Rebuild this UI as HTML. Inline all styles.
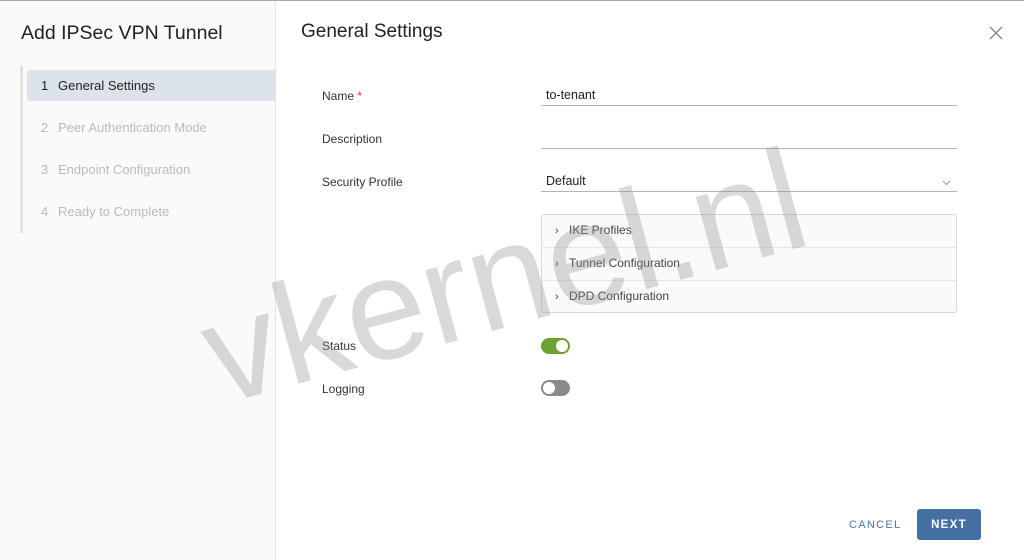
<!DOCTYPE html>
<html><head><meta charset="utf-8"><style>
*{margin:0;padding:0;box-sizing:border-box}
body{width:1024px;height:560px;overflow:hidden;background:#fff;font-family:"Liberation Sans",sans-serif;position:relative;color:#333}
.top{position:absolute;left:0;top:0;width:1024px;height:1px;background:#a8a8a8}
.left{position:absolute;left:0;top:1px;width:276px;height:559px;background:#fafafa;border-right:1px solid #e6e6e6}
.title{position:absolute;left:21px;top:21px;font-size:19.5px;color:#222}
.bar{position:absolute;left:20px;top:65px;width:3px;height:167px;background:#e2e2e2}
.step{position:absolute;left:27px;width:249px;height:31px;font-size:13px;line-height:31px;padding-left:14px;color:#bbb}
.step b{font-weight:normal;display:inline-block;width:17px}
.step.a{background:#dde3ea;color:#222;border-radius:3px 0 0 3px}
.h{position:absolute;left:301px;top:21px;font-size:19px;color:#222}
.x{position:absolute;left:989px;top:26px}
.lab{position:absolute;left:322px;font-size:12px;color:#333}
.inp{position:absolute;left:541px;width:416px;height:20px;border-bottom:1px solid #b5b5b5;font-size:12.5px;padding-left:5px;padding-top:2px;color:#222}
.acc{position:absolute;left:541px;top:214px;width:416px;height:99px;border:1px solid #d8d8d8;border-radius:3px;background:#fafafa}
.row{height:33px;border-bottom:1px solid #e6e6e6;font-size:12px;line-height:31px;padding-left:13px;color:#444}
.row:last-child{border-bottom:none}
.row span{display:inline-block;width:14px;font-size:11px}
.tg{position:absolute;left:541px;width:29px;height:16px;border-radius:8px}
.tg i{position:absolute;top:2px;width:12px;height:12px;border-radius:50%;background:#fff}
.wm{position:absolute;left:220px;top:284px;font-size:144px;line-height:1;color:rgba(150,150,150,0.36);transform:rotate(-15.2deg);transform-origin:0 122px;white-space:nowrap}
.cancel{position:absolute;left:849px;top:519px;font-size:11px;letter-spacing:1.3px;color:#4a77a6}
.next{position:absolute;left:917px;top:509px;width:64px;height:31px;background:#4471a1;border-radius:3px;color:#fff;font-size:11.5px;letter-spacing:1.3px;line-height:33px;text-align:center;font-weight:bold}
</style></head><body>
<div class="top"></div>
<div class="left">
<div class="title">Add IPSec VPN Tunnel</div>
<div class="bar"></div>
<div class="step a" style="top:69px"><b>1</b>General Settings</div>
<div class="step" style="top:111px"><b>2</b>Peer Authentication Mode</div>
<div class="step" style="top:153px"><b>3</b>Endpoint Configuration</div>
<div class="step" style="top:195px"><b>4</b>Ready to Complete</div>
</div>
<div class="h">General Settings</div>
<svg class="x" width="14" height="14" viewBox="0 0 14 14"><path d="M1 1L13 13M13 1L1 13" stroke="#888" stroke-width="1.3"/></svg>
<div class="lab" style="top:89px">Name <span style="color:#d44">*</span></div>
<div class="lab" style="top:132px">Description</div>
<div class="lab" style="top:175px">Security Profile</div>
<div class="inp" style="top:86px">to-tenant</div>
<div class="inp" style="top:129px"></div>
<div class="inp" style="top:172px">Default<svg style="position:absolute;right:6px;top:8px" width="9" height="6" viewBox="0 0 9 6"><path d="M1 1L4.5 4.5L8 1" stroke="#999" fill="none"/></svg></div>
<div class="acc">
<div class="row"><span>›</span>IKE Profiles</div>
<div class="row"><span>›</span>Tunnel Configuration</div>
<div class="row"><span>›</span>DPD Configuration</div>
</div>
<div class="lab" style="top:339px">Status</div>
<div class="lab" style="top:382px">Logging</div>
<div class="tg" style="top:338px;background:#6ea12f"><i style="left:15px"></i></div>
<div class="tg" style="top:380px;background:#8a8a8a"><i style="left:2px"></i></div>
<div class="wm">vkernel.nl</div>
<div class="cancel">CANCEL</div>
<div class="next">NEXT</div>
</body></html>
